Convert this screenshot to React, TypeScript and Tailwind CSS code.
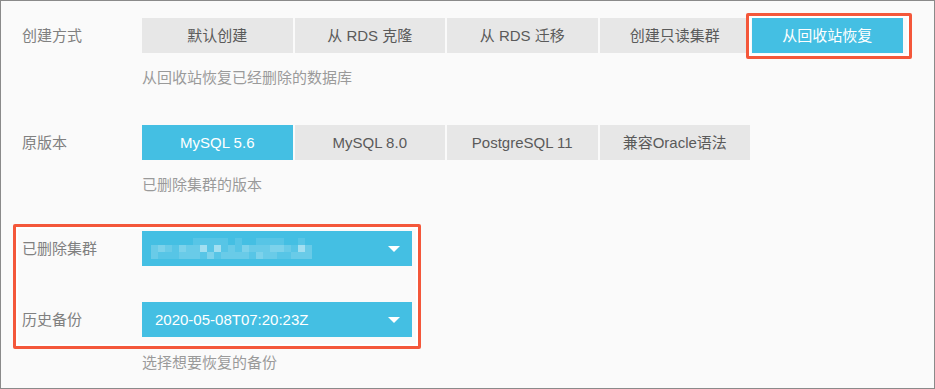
import React from 'react';

const createModes = ['默认创建', '从 RDS 克隆', '从 RDS 迁移', '创建只读集群', '从回收站恢复'];
const versions = ['MySQL 5.6', 'MySQL 8.0', 'PostgreSQL 11', '兼容Oracle语法'];

// blurred cluster name, one class per 7px block
const lv = ['bg-transparent', 'bg-white/10', 'bg-white/20', 'bg-white/30', 'bg-white/50'];
const mosaic = [
  [0, 0, 0, 0, 0, 0, 1, 1, 1, 1, 1, 0, 1, 0, 0, 1, 1, 1, 1, 0, 0, 1, 0],
  [2, 3, 2, 1, 3, 2, 2, 4, 1, 4, 1, 2, 1, 3, 2, 2, 2, 3, 3, 2, 1, 4, 2],
  [2, 1, 1, 1, 2, 2, 2, 1, 3, 1, 2, 2, 2, 2, 1, 3, 2, 2, 1, 1, 2, 2, 2],
];

const Option = ({ label, active }: { label: string; active?: boolean }) => (
  <div
    className={`w-[150.5px] h-[35px] flex items-center justify-center text-[15px] ${
      active ? 'bg-[#44bfe3] text-white' : 'bg-[#e7e7e7] text-[#5a5a5a]'
    }`}
  >
    {label}
  </div>
);

const Caret = () => (
  <svg width="12" height="6" viewBox="0 0 12 6" className="shrink-0">
    <polygon points="0,0 12,0 6,6" fill="#fff" />
  </svg>
);

const Label = ({ children }: { children: React.ReactNode }) => (
  <div className="w-[120px] shrink-0 text-[15px] text-[#808080]">{children}</div>
);

export default function App() {
  return (
    <div className="relative w-[935px] h-[389px] border border-[#8a8a8a] bg-[#fafafa] pl-[21px] pt-[17px] font-['Liberation_Sans','Noto_Sans_CJK_SC',sans-serif] leading-[20px]">
      <div className="flex items-center">
        <Label>创建方式</Label>
        <div className="flex gap-[2px]">
          {createModes.map((m, i) => (
            <Option key={m} label={m} active={i === 4} />
          ))}
        </div>
      </div>
      <div className="ml-[120px] mt-[15px] text-[15px] text-[#9a9a9a]">从回收站恢复已经删除的数据库</div>

      <div className="flex items-center mt-[37px]">
        <Label>原版本</Label>
        <div className="flex gap-[2px]">
          {versions.map((v, i) => (
            <Option key={v} label={v} active={i === 0} />
          ))}
        </div>
      </div>
      <div className="ml-[120px] mt-[15px] text-[15px] text-[#9a9a9a]">已删除集群的版本</div>

      <div className="flex items-center mt-[36px]">
        <Label>已删除集群</Label>
        <div className="w-[270px] h-[35px] bg-[#44bfe3] flex items-center justify-between pl-[9px] pr-[12px]">
          <div className="flex flex-col">
            {mosaic.map((row, r) => (
              <div key={r} className="flex">
                {row.map((c, k) => (
                  <div key={k} className={`w-[7px] h-[7px] ${lv[c]}`} />
                ))}
              </div>
            ))}
          </div>
          <Caret />
        </div>
      </div>

      <div className="flex items-center mt-[36px]">
        <Label>历史备份</Label>
        <div className="w-[270px] h-[35px] bg-[#44bfe3] flex items-center justify-between pl-[13px] pr-[12px] text-white text-[15px]">
          <span>2020-05-08T07:20:23Z</span>
          <Caret />
        </div>
      </div>
      <div className="ml-[120px] mt-[16px] text-[15px] text-[#9a9a9a]">选择想要恢复的备份</div>

      {/* annotation boxes */}
      <div className="absolute left-[745px] top-[12px] w-[166px] h-[46px] border-[3px] border-[#f4573a] rounded-[2px] shadow-[inset_0_0_0_2px_#fff]" />
      <div className="absolute left-[12px] top-[223px] w-[408px] h-[125px] border-[3px] border-[#f4573a] rounded-[2px] shadow-[inset_0_0_0_2px_#fff]" />
    </div>
  );
}
